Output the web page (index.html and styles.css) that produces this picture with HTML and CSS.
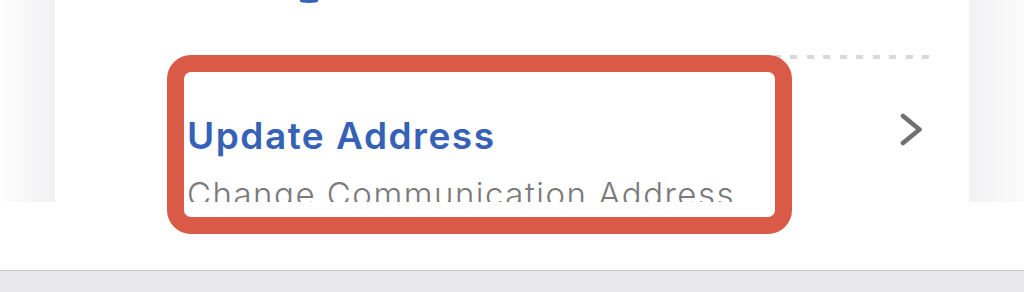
FILE: index.html
```html
<!DOCTYPE html>
<html lang="en">
<head>
<meta charset="utf-8">
<title>Update Address</title>
<link rel="stylesheet" href="styles.css">
</head>
<body>
<div class="page">
  <div class="screen">
    <div class="gutter gutter-left"></div>
    <div class="card">
      <div class="prev-tail"><span class="descender"></span></div>
      <div class="divider"></div>
      <div class="row">
        <div class="row-text">
          <div class="row-title">Update Address</div>
          <div class="row-sub">Change Communication Address</div>
        </div>
        <svg class="chevron" width="22" height="33" viewBox="0 0 22 33" aria-hidden="true">
          <polyline points="3,3 19.5,16.5 3,30" fill="none" stroke="#707070" stroke-width="4.6" stroke-linecap="round" stroke-linejoin="round"/>
        </svg>
      </div>
    </div>
    <div class="gutter gutter-right"></div>
  </div>
  <div class="bottom-bar"></div>
  <div class="system-bar"></div>
  <div class="highlight"></div>
</div>
</body>
</html>
```
FILE: styles.css
```css
html, body {
  margin: 0;
  padding: 0;
  background: #ffffff;
}
.page {
  position: relative;
  width: 1024px;
  height: 292px;
  overflow: hidden;
  font-family: "Inter", "Noto Sans", sans-serif;
}
.screen {
  display: flex;
  height: 202px;
  overflow: hidden;
}
.gutter {
  width: 55px;
  flex: 0 0 55px;
}
.gutter-left {
  background: linear-gradient(to right, #fefefe, #f1f1f3);
}
.gutter-right {
  background: linear-gradient(to right, #f2f2f4, #fbfbfb);
}
.card {
  flex: 1;
  background: #ffffff;
  padding: 0 40px 0 132px;
}
.prev-tail {
  height: 55px;
}
.descender {
  display: block;
  margin-left: 113px;
  width: 18px;
  height: 3px;
  background: #3561b6;
  border-radius: 0 0 50% 50%;
}
.divider {
  height: 4px;
  background: repeating-linear-gradient(to left, #d9d9db 0 7px, transparent 7px 16.5px);
}
.row {
  display: flex;
  align-items: flex-start;
  padding-top: 55px;
}
.row-text {
  flex: 1;
  white-space: nowrap;
}
.row-title {
  font-size: 37px;
  line-height: 44px;
  font-weight: 600;
  letter-spacing: 1.5px;
  color: #3561b6;
}
.row-sub {
  margin-top: 16px;
  font-size: 33px;
  line-height: 40px;
  font-weight: 300;
  letter-spacing: 1.5px;
  color: #7a7a7a;
}
.chevron {
  display: block;
  flex: 0 0 auto;
  margin-top: -1px;
  margin-right: 7px;
}
.bottom-bar {
  height: 68px;
  background: #ffffff;
  border-bottom: 1px solid #c9c9cc;
}
.system-bar {
  height: 21px;
  background: #e8e8ed;
}
.highlight {
  position: absolute;
  left: 167px;
  top: 55px;
  width: 625px;
  height: 179px;
  box-sizing: border-box;
  border: 17.5px solid #d95a47;
  border-radius: 24px;
}
```
